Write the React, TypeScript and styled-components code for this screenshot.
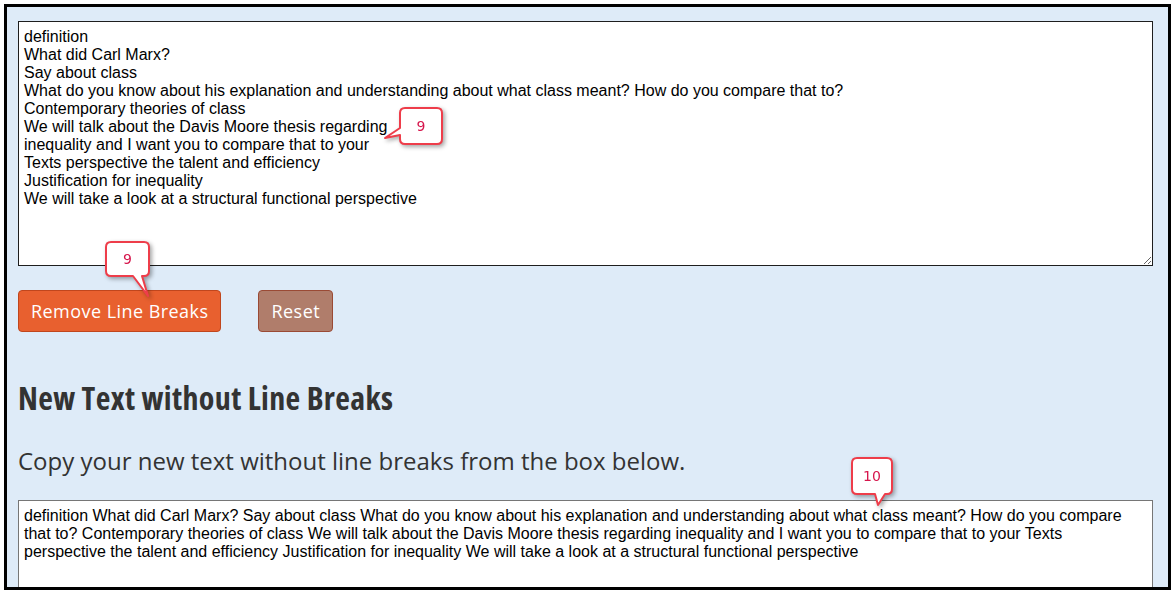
import styled, { createGlobalStyle } from 'styled-components';

const GlobalStyle = createGlobalStyle`
	html, body {
		margin: 0;
		padding: 0;
		background: #ffffff;
	}
	* {
		box-sizing: border-box;
	}
`;

const Page = styled.div`
	position: relative;
	width: 1172px;
	height: 596px;
	padding: 4px 1px 0 4px;
	background: #ffffff;
`;

const Frame = styled.div`
	width: 1167px;
	height: 586px;
	border: 3px solid #000000;
	background: #deebf8;
	padding: 14px 15px 0 11px;
	overflow: hidden;
	display: flex;
	flex-direction: column;
`;

const TextBox = styled.textarea<{ $rows: number; $dark?: boolean }>`
	display: block;
	width: 100%;
	height: ${(p) => p.$rows}px;
	flex-shrink: 0;
	margin: 0;
	padding: 6px ${(p) => (p.$dark ? 5 : 28)}px 6px 5px;
	border: 1px solid ${(p) => (p.$dark ? '#1e1e1e' : '#767676')};
	border-radius: 0;
	background: #ffffff;
	color: #000000;
	font-family: 'Liberation Sans', Arial, sans-serif;
	font-size: 16px;
	line-height: 18px;
	outline: none;
`;

const Buttons = styled.div`
	display: flex;
	gap: 37px;
	margin-top: 24px;
`;

const Button = styled.button<{ $tone: 'orange' | 'brown' }>`
	height: 42px;
	padding: 0 12px;
	border-radius: 4px;
	border: 1px solid ${(p) => (p.$tone === 'orange' ? '#c0461d' : '#9a4a35')};
	background: ${(p) => (p.$tone === 'orange' ? '#e8602f' : '#b07d6b')};
	color: #ffffff;
	font-family: 'Open Sans', sans-serif;
	font-size: 18px;
	letter-spacing: 0.45px;
	cursor: pointer;
`;

const Heading = styled.h2`
	margin: 46px 0 0;
	color: #333333;
	font-family: 'Open Sans', sans-serif;
	font-weight: 700;
	font-stretch: 75%;
	font-size: 32px;
	line-height: 40px;
	letter-spacing: 0.35px;
`;

const Lead = styled.p`
	margin: 27px 0 0;
	color: #333333;
	font-family: 'Open Sans', sans-serif;
	font-size: 24px;
	line-height: 32px;
`;

const Callout = styled.div<{ $x: number; $y: number; $w: number; $h: number }>`
	position: absolute;
	left: ${(p) => p.$x}px;
	top: ${(p) => p.$y}px;
	width: ${(p) => p.$w}px;
	height: ${(p) => p.$h}px;
	filter: drop-shadow(2px 2px 2px rgba(0, 0, 0, 0.35));
	pointer-events: none;

	svg {
		display: block;
	}
`;

const CalloutLabel = styled.span<{ $x: number; $y: number; $w: number; $h: number }>`
	position: absolute;
	left: ${(p) => p.$x}px;
	top: ${(p) => p.$y}px;
	width: ${(p) => p.$w}px;
	height: ${(p) => p.$h}px;
	display: flex;
	align-items: center;
	justify-content: center;
	color: #d6164c;
	font-family: 'DejaVu Sans', sans-serif;
	font-size: 14px;
`;

type Note = {
	x: number;
	y: number;
	w: number;
	h: number;
	path: string;
	box: [number, number, number, number];
	label: string;
};

const notes: Note[] = [
	{
		x: 380,
		y: 103,
		w: 70,
		h: 50,
		path: 'M25 5 H57 Q62 5 62 10 V36 Q62 41 57 41 H25 Q20 41 20 36 V32 L5 35 L20 25 V10 Q20 5 25 5 Z',
		box: [20, 5, 42, 36],
		label: '9',
	},
	{
		x: 100,
		y: 236,
		w: 60,
		h: 66,
		path: 'M11 6 H44 Q49 6 49 11 V35 Q49 40 44 40 H42 L48 60 L33 40 H11 Q6 40 6 35 V11 Q6 6 11 6 Z',
		box: [6, 6, 43, 34],
		label: '9',
	},
	{
		x: 846,
		y: 452,
		w: 54,
		h: 58,
		path: 'M11 6 H41 Q46 6 46 11 V37 Q46 42 41 42 H39 L32 53 L29 42 H11 Q6 42 6 37 V11 Q6 6 11 6 Z',
		box: [6, 6, 40, 36],
		label: '10',
	},
];

const original = [
	'definition',
	'What did Carl Marx?',
	'Say about class',
	'What do you know about his explanation and understanding about what class meant? How do you compare that to?',
	'Contemporary theories of class',
	'We will talk about the Davis Moore thesis regarding',
	'inequality and I want you to compare that to your',
	'Texts perspective the talent and efficiency',
	'Justification for inequality',
	'We will take a look at a structural functional perspective',
].join('\n');

const App = () => {
	return (
		<>
			<GlobalStyle />
			<Page>
				<Frame>
					<TextBox $rows={245} $dark defaultValue={original} spellCheck={false} />
					<Buttons>
						<Button $tone="orange">Remove Line Breaks</Button>
						<Button $tone="brown">Reset</Button>
					</Buttons>
					<Heading>New Text without Line Breaks</Heading>
					<Lead>Copy your new text without line breaks from the box below.</Lead>
					<TextBox
						$rows={200}
						style={{ marginTop: 23 }}
						defaultValue={original.split('\n').join(' ')}
						spellCheck={false}
					/>
				</Frame>
				{notes.map((n, i) => (
					<Callout key={i} $x={n.x} $y={n.y} $w={n.w} $h={n.h}>
						<svg width={n.w} height={n.h} viewBox={`0 0 ${n.w} ${n.h}`}>
							<path d={n.path} fill="#ffffff" stroke="#ee3d4a" strokeWidth="2" strokeLinejoin="round" />
						</svg>
						<CalloutLabel $x={n.box[0]} $y={n.box[1]} $w={n.box[2]} $h={n.box[3]}>
							{n.label}
						</CalloutLabel>
					</Callout>
				))}
			</Page>
		</>
	);
};

export default App;
